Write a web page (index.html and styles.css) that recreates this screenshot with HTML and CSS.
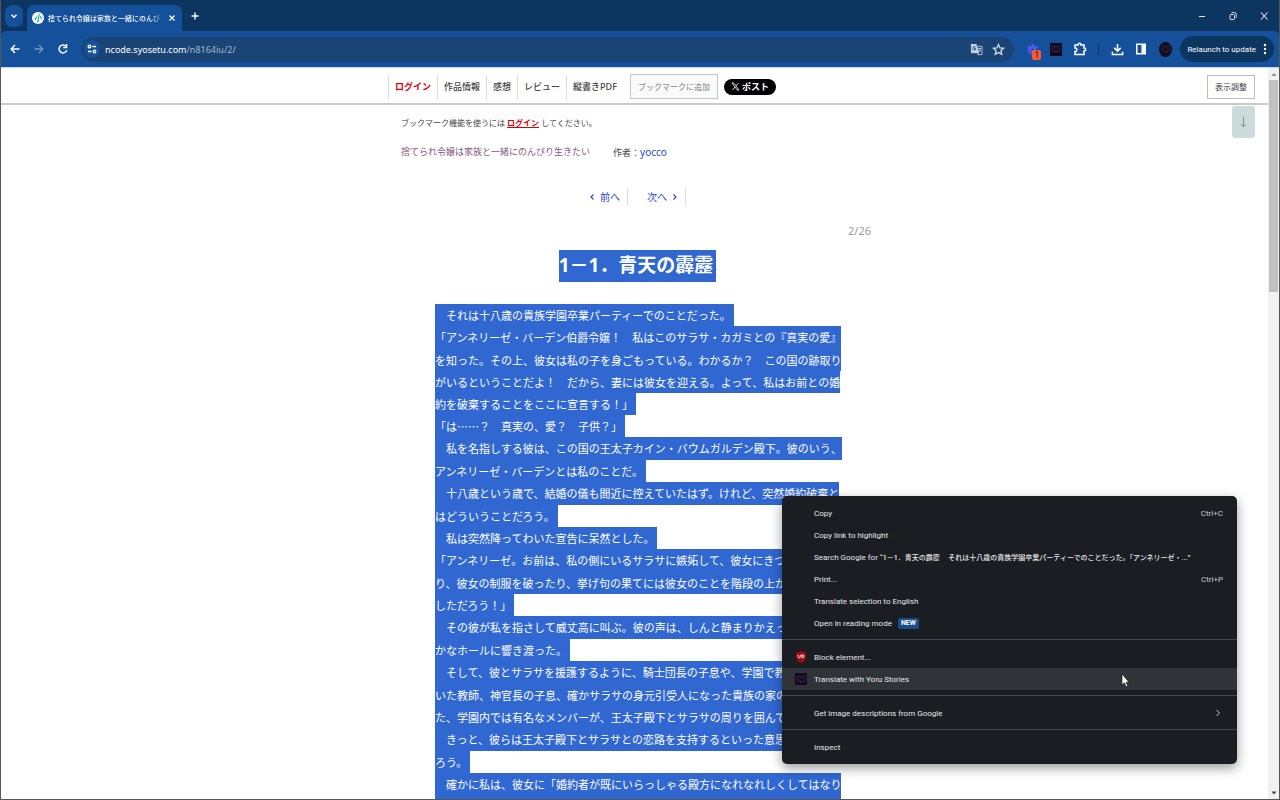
FILE: index.html
```html
<!DOCTYPE html>
<html lang="ja">
<head>
<meta charset="utf-8">
<title>捨てられ令嬢は家族と一緒にのんびり生きたい</title>
<link rel="stylesheet" href="styles.css">
</head>
<body>
<svg class="defs" aria-hidden="true">
  <symbol id="book" viewBox="0 0 16 16"><path d="M8 5.500C7 4 5 3.500 3.500 4.500 2 6 2 9.500 3.500 11c1.500 0 3.500.3 4.500 1.500 1-1.200 3-1.500 4.500-1.500C14 9.500 14 6 12.500 4.500 11 3.500 9 4 8 5.500zM8 5.500v1.500M8 10v2.500M5.500 7v1.500M10.500 7v1.500" fill="none" stroke="#463a5c" stroke-width=".9"/></symbol>
</svg>
<div class="window">
  <div class="tabs">
    <button class="tab-search" aria-label="Search tabs"><svg viewBox="0 0 12 12" width="10" height="10"><path d="M3 4.500 6 7.500l3-3" fill="none" stroke="#fff" stroke-width="1.800"/></svg></button>
    <div class="tab">
      <svg viewBox="0 0 12 12" width="12" height="12"><circle cx="6" cy="6" r="6" fill="#fff"/><path d="M7.200 2 6 9.500l-1-.6M4.800 4.500 3 8M8.500 4l1 3.300" fill="none" stroke="#18a7c9" stroke-width="1.200"/></svg>
      <span class="tab-title">捨てられ令嬢は家族と一緒にのんび</span>
      <button aria-label="Close tab"><svg viewBox="0 0 8 8" width="8" height="8"><path d="m1.500 1.500 5 5m0-5-5 5" stroke="#fff" stroke-width="1.200"/></svg></button>
    </div>
    <button class="new-tab" aria-label="New tab"><svg viewBox="0 0 10 10" width="10" height="10"><path d="M5 1.500v7M1.500 5h7" stroke="#fff" stroke-width="1.400"/></svg></button>
    <div class="window-buttons">
      <button aria-label="Minimize"><svg viewBox="0 0 10 10" width="10" height="10"><path d="M2 5.500h6" stroke="#dfe7f0"/></svg></button>
      <button aria-label="Restore"><svg viewBox="0 0 10 10" width="10" height="10"><rect x="2" y="3.500" width="4.500" height="5" rx="1" fill="none" stroke="#dfe7f0"/><path d="M3.500 2Q4 1.500 5 1.500h1.500Q8.300 1.500 8.300 3.500V5.500q0 1-.8 1.500" fill="none" stroke="#dfe7f0"/></svg></button>
      <button aria-label="Close"><svg viewBox="0 0 10 10" width="10" height="10"><path d="m2 1.500 6.500 7m0-7L2 8.500" stroke="#dfe7f0" stroke-width="1.100"/></svg></button>
    </div>
  </div>
  <div class="toolbar">
    <div class="nav-buttons">
      <button aria-label="Back"><svg viewBox="0 0 12 12" width="12" height="12"><path d="M10.500 6H2.500M6 2 2.200 6 6 10" fill="none" stroke="#fff" stroke-width="1.500"/></svg></button>
      <button aria-label="Forward"><svg viewBox="0 0 12 12" width="12" height="12"><path d="M1.500 6h8M6 2l3.800 4L6 10" fill="none" stroke="#7497c4" stroke-width="1.300"/></svg></button>
      <button aria-label="Reload"><svg viewBox="0 0 12 12" width="12" height="12"><path d="M9.800 7.300A4 4 0 1 1 9 3.200" fill="none" stroke="#fff" stroke-width="1.500"/><path d="M10.300 1v4.200H6.200V3.800h2.700V1z" fill="#fff"/></svg></button>
    </div>
    <div class="omnibox">
      <button class="site-info" aria-label="Site information"><svg viewBox="0 0 12 12" width="12" height="12" fill="none" stroke="#fff" stroke-width="1.300"><circle cx="3.500" cy="3.500" r="1.300"/><path d="M6.500 3.500H10M2 8.500h3.500"/><circle cx="8.500" cy="8.500" r="1.300"/></svg></button>
      <div class="url" role="textbox" aria-label="Address">ncode.syosetu.com<span>/n8164iu/2/</span></div>
      <button aria-label="Translate this page"><svg viewBox="0 0 14 14" width="13" height="13"><path d="M1 1h6l3 10H2q-1 0-1-1z" fill="#c3cede"/><path d="M6 4.500A1.800 1.800 0 1 0 6 7V6H4.500" fill="none" stroke="#1a4476"/><path d="M8 3.500h5v9H8l1.500-1.500M8.500 6H12M10.300 5v1M11.500 6q-.5 2.500-3 3.500M9.500 7.500l2.500 2" fill="none" stroke="#c3cede" stroke-width=".9"/></svg></button>
      <button aria-label="Bookmark this tab"><svg viewBox="0 0 12 12" width="13" height="13"><path d="m6 1.300 1.400 3.200 3.400.3-2.600 2.300.8 3.400L6 8.700l-3 1.800.8-3.400L1.200 4.800l3.400-.3z" fill="none" stroke="#dbe4f0" stroke-width="1.100"/></svg></button>
    </div>
    <div class="extensions">
      <button class="ext" aria-label="Extension"><svg viewBox="0 0 14 14" width="13" height="13"><path d="M7 1v4M4 2l1.500 3.500M1.500 4.500 5 6M1 7.500h4M2 11l3-2.500M10 2 8.500 5M12.500 4.500 9 6M5 13l1-3.500" stroke="#5d5cff" stroke-width="1.300"/><circle cx="7" cy="7" r="2.300" fill="none" stroke="#5d5cff" stroke-width="1.300"/></svg><span class="badge">1</span></button>
      <button class="ext dark" aria-label="Yoru Stories"><svg width="12" height="12"><use href="#book"/></svg></button>
      <button class="ext" aria-label="Extensions"><svg viewBox="0 0 14 14" width="14" height="14"><path d="M2 3h3q0-1.700 1.500-1.700T8 3h3v3q1.700 0 1.700 1.500T11 9v3.500H2V9.500q1.800 0 1.800-1.800T2 6z" fill="none" stroke="#fff" stroke-width="1.500"/></svg></button>
      <span class="divider"></span>
      <button class="ext" aria-label="Downloads"><svg viewBox="0 0 12 12" width="13" height="13"><path d="M6 1v6M3 4.500l3 3 3-3M1.300 8v2.700h9.400V8" fill="none" stroke="#fff" stroke-width="1.400"/></svg></button>
      <button class="ext" aria-label="Side panel"><svg viewBox="0 0 12 12" width="12" height="12"><path d="M1 .5h10v11H1zM2.500 2v8H6.500V2z" fill="#fff" fill-rule="evenodd"/></svg></button>
      <button class="ext dark round" aria-label="Profile"><svg width="12" height="12"><use href="#book"/></svg></button>
    </div>
    <button class="relaunch">Relaunch to update<svg viewBox="0 0 4 12" width="4" height="12" fill="#fff"><circle cx="2" cy="2" r="1.200"/><circle cx="2" cy="6" r="1.200"/><circle cx="2" cy="10" r="1.200"/></svg></button>
  </div>

  <div class="viewport">
    <div class="page">
      <header class="site-header">
        <nav>
          <a class="login" href="#">ログイン</a><a href="#">作品情報</a><a href="#">感想</a><a href="#">レビュー</a><a href="#">縦書きPDF</a>
          <button class="bookmark">ブックマークに追加</button>
          <button class="post"><svg viewBox="0 0 10 10" width="9" height="9"><path d="M1 1h2l6 8H7zM8.500 1 5.500 4.400M4.500 5.600 1.500 9" fill="none" stroke="#fff" stroke-width=".9"/></svg>ポスト</button>
        </nav>
        <button class="display">表示調整</button>
      </header>
      <button class="scroll-down" aria-label="ページ下部へ"><svg viewBox="0 0 10 14" width="9" height="12"><path d="M5 1v11.500M2 9.500l3 3 3-3" fill="none" stroke="#768281"/></svg></button>
      <main>
        <p class="notice">ブックマーク機能を使うには <a href="#">ログイン</a> してください。</p>
        <p class="work"><a href="#">捨てられ令嬢は家族と一緒にのんびり生きたい</a><span>作者：<a class="author" href="#">yocco</a></span></p>
        <div class="pager">
          <a href="#"><svg viewBox="0 0 6 8" width="6" height="8"><path d="M4.500 1.500 2 4l2.500 2.500" fill="none" stroke="#2847c8" stroke-width="1.200"/></svg>前へ</a>
          <a href="#">次へ<svg viewBox="0 0 6 8" width="6" height="8"><path d="M1.500 1.500 4 4 1.500 6.500" fill="none" stroke="#2847c8" stroke-width="1.200"/></svg></a>
        </div>
        <p class="count">2/26</p>
        <h1><span>1－1．青天の霹靂</span></h1>
        <article>
          <p><span>　それは十八歳の貴族学園卒業パーティーでのことだった。</span></p>
          <p><span>「アンネリーゼ・バーデン伯爵令嬢！　私はこのサラサ・カガミとの『真実の愛』</span><span>を知った。その上、彼女は私の子を身ごもっている。わかるか？　この国の跡取り</span><span>がいるということだよ！　だから、妻には彼女を迎える。よって、私はお前との婚</span><span>約を破棄することをここに宣言する！」</span></p>
          <p><span>「は……？　真実の、愛？　子供？」</span></p>
          <p><span>　私を名指しする彼は、この国の王太子カイン・バウムガルデン殿下。彼のいう、</span><span>アンネリーゼ・バーデンとは私のことだ。</span></p>
          <p><span>　十八歳という歳で、結婚の儀も間近に控えていたはず。けれど、突然婚約破棄と</span><span>はどういうことだろう。</span></p>
          <p><span>　私は突然降ってわいた宣告に呆然とした。</span></p>
          <p><span>「アンネリーゼ。お前は、私の側にいるサラサに嫉妬して、彼女にきつく</span><span>り、彼女の制服を破ったり、挙げ句の果てには彼女のことを階段の上から</span><span>しただろう！」</span></p>
          <p><span>　その彼が私を指さして威丈高に叫ぶ。彼の声は、しんと静まりかえった</span><span>かなホールに響き渡った。</span></p>
          <p><span>　そして、彼とサラサを援護するように、騎士団長の子息や、学園で教鞭</span><span>いた教師、神官長の子息、確かサラサの身元引受人になった貴族の家の子</span><span>た、学園内では有名なメンバーが、王太子殿下とサラサの周りを囲んでい</span></p>
          <p><span>　きっと、彼らは王太子殿下とサラサとの恋路を支持するといった意思表</span><span>ろう。</span></p>
          <p class="more"><span>　確かに私は、彼女に「婚約者が既にいらっしゃる殿方になれなれしくしてはなり</span></p>
        </article>
      </main>
    </div>
    <div class="scrollbar" aria-hidden="true">
      <svg viewBox="0 0 10 12" width="10" height="12"><path d="m2.500 8 2.500-3 2.500 3z" fill="#8b8b8b"/></svg>
      <div class="thumb"></div>
      <svg viewBox="0 0 10 12" width="10" height="12"><path d="m2.500 4.500 2.500 3 2.500-3z" fill="#404040"/></svg>
    </div>
  </div>
</div>

<div class="menu" role="menu">
  <div class="group">
    <button role="menuitem">Copy<kbd>Ctrl+C</kbd></button>
    <button role="menuitem">Copy link to highlight</button>
    <button role="menuitem"><span>Search Google for “<span class="query">1－1．青天の霹靂　 それは十八歳の貴族学園卒業パーティーでのことだった。「アンネリーゼ・...</span>”</span></button>
    <button role="menuitem">Print...<kbd>Ctrl+P</kbd></button>
    <button role="menuitem">Translate selection to English</button>
    <button role="menuitem">Open in reading mode<span class="new">NEW</span></button>
  </div>
  <div class="group">
    <button role="menuitem" class="with-icon"><svg viewBox="0 0 12 12" width="12" height="12"><path d="M6 0q2 1.200 5 1.200v5Q11 10 6 12 1 10 1 6.200v-5Q4 1.200 6 0z" fill="#9b0a12"/><path d="M3.200 3.800v1.800q0 1.200 1.100 1.200t1.100-1.200V3.800M7 3.800v3q2 .2 2-1.500T7 3.800z" fill="none" stroke="#fff" stroke-width=".9"/></svg>Block element...</button>
    <button role="menuitem" class="with-icon hover"><svg class="dark" width="12" height="12"><use href="#book"/></svg>Translate with Yoru Stories</button>
  </div>
  <div class="group">
    <button role="menuitem">Get image descriptions from Google<svg class="arrow" viewBox="0 0 6 8" width="6" height="8"><path d="M1.500 1 4.500 4l-3 3" fill="none" stroke="#c7c9cc"/></svg></button>
  </div>
  <div class="group">
    <button role="menuitem">Inspect</button>
  </div>
</div>
<svg class="cursor" viewBox="0 0 9 15" width="9" height="15" aria-hidden="true"><path d="M1 1v11l2.400-2.200L5 13.700l1.700-.8-1.600-3.600H8z" fill="#fff" stroke="#111" stroke-width=".6"/></svg>
</body>
</html>
```
FILE: styles.css
```css
* { box-sizing: border-box; }
body {
  margin: 0;
  font-family: "Noto Sans", "Noto Sans CJK JP", sans-serif;
  color: #444;
  background: #fff;
}
p, h1 { margin: 0; }
a { color: inherit; text-decoration: none; }
svg { display: block; flex: none; }
button {
  display: flex;
  align-items: center;
  justify-content: center;
  padding: 0;
  border: 0;
  background: none;
  color: inherit;
  font: inherit;
  white-space: nowrap;
}
.defs { position: absolute; width: 0; height: 0; }
.window {
  display: flex;
  flex-direction: column;
  height: 100vh;
  overflow: hidden;
  border: 1px solid #555;
  border-top: 0;
  background: #0c3560;
}

/* Tab strip */
.tabs {
  display: flex;
  align-items: center;
  height: 31px;
  flex: none;
  padding-left: 4px;
}
.tab-search { width: 18px; height: 22px; border-radius: 7px; background: #14519a; }
.tab {
  display: flex;
  align-items: center;
  align-self: flex-end;
  gap: 4px;
  width: 155px;
  height: 26px;
  margin-left: 4px;
  padding: 0 6px 0 5px;
  border-radius: 7px 7px 0 0;
  background: #14519a;
}
.tab-title {
  flex: 1;
  overflow: hidden;
  white-space: nowrap;
  font-size: 7px;
  font-weight: 500;
  color: #fff;
  mask-image: linear-gradient(to right, #000 88%, transparent);
}
.new-tab { margin-left: 8px; }
.window-buttons { display: flex; gap: 21px; margin-left: auto; padding-right: 10px; }

/* Toolbar */
.toolbar {
  display: flex;
  align-items: center;
  height: 37px;
  flex: none;
  padding: 0 5px 0 8px;
  border-bottom: 1px solid #c5d6ea;
  border-radius: 5px 5px 0 0;
  background: #14519a;
}
.nav-buttons { display: flex; gap: 12px; }
.omnibox {
  display: flex;
  align-items: center;
  flex: 1;
  gap: 9px;
  height: 25px;
  margin-left: 12px;
  padding: 0 9px 0 3px;
  border-radius: 13px;
  background: #1a4476;
}
.site-info { width: 16px; height: 18px; border-radius: 9px; background: #14519a; }
.url { flex: 1; margin-left: -4px; font-size: 9px; color: #fff; }
.url span { color: #a5b7ce; }
.extensions { display: flex; align-items: center; gap: 12px; margin: 0 8px 0 12px; }
.ext { position: relative; width: 12px; height: 13px; }
.dark { background: #120a1e; }
.round { border-radius: 50%; width: 13px; height: 15px; }
.badge {
  position: absolute;
  left: 6px;
  top: 7px;
  width: 9px;
  height: 10px;
  border-radius: 2px;
  background: #fa5a35;
  color: #201010;
  font-size: 8px;
  line-height: 10px;
}
.divider { width: 1px; height: 12px; background: #0c3560; }
.relaunch {
  gap: 7px;
  height: 26px;
  padding: 0 7px;
  border-radius: 13px;
  background: #0c3560;
  color: #fff;
  font-family: Roboto, sans-serif;
  font-size: 8px;
}

/* Page */
.viewport { display: flex; flex: 1; min-height: 0; background: #fff; }
.page { position: relative; flex: 1; overflow: hidden; }
.site-header {
  display: grid;
  grid-template-columns: 1fr 493px 1fr;
  align-items: center;
  height: 37px;
  padding-top: 2px;
  border-bottom: 2px solid #c9c9c9;
}
nav {
  display: flex;
  grid-column: 2;
  align-items: center;
  font-size: 9px;
  font-weight: 500;
  white-space: nowrap;
}
nav a {
  padding: 0 6px;
  border-left: 1px solid #ddd;
  line-height: 24px;
}
nav .login { color: #d8000f; font-weight: 700; }
.bookmark {
  height: 25px;
  margin: 0 6px 0 7px;
  padding: 0 7px;
  border: 1px solid #c4c4c4;
  background: #fafafa;
  color: #999;
  font-size: 8px;
}
.post {
  gap: 2px;
  height: 16px;
  padding: 0 7px;
  border-radius: 8px;
  background: #000;
  color: #fff;
  font-weight: 700;
}
.display {
  justify-self: end;
  height: 24px;
  margin-right: 13px;
  padding: 0 7px;
  border: 1px solid #bbb;
  font-size: 8px;
}
.scroll-down {
  position: absolute;
  top: 38px;
  right: 13px;
  width: 23px;
  height: 32px;
  border-radius: 3px;
  background: #cbdcdb;
}
main { width: 493px; margin: 0 auto; }
.notice { padding: 11px 13px 0; font-size: 8px; line-height: 14px; }
.notice a { color: #d8000f; font-weight: 700; text-decoration: underline; }
.work {
  display: flex;
  gap: 23px;
  padding: 14px 13px 0;
  font-size: 9px;
  line-height: 16px;
}
.work > a { color: #85597c; }
.work .author { color: #2847c8; font-size: 10px; }
.pager {
  display: flex;
  gap: 19px;
  justify-content: center;
  margin-top: 27px;
  padding-left: 6px;
  font-size: 10px;
  line-height: 18px;
  color: #2847c8;
}
.pager a {
  display: flex;
  align-items: center;
  gap: 5px;
  padding-right: 7px;
  border-right: 1px solid #ddd;
}
.count {
  margin-top: 16px;
  padding-right: 10px;
  text-align: right;
  font-size: 11px;
  line-height: 18px;
  color: #999;
}
h1 {
  display: flex;
  justify-content: center;
  margin-top: 10px;
  padding-left: 6px;
  font-size: 19px;
  line-height: 30px;
  color: #fff;
}
h1 span { padding: 0 3px 2px 0; background: #3067d1; }
article {
  margin: 22px 0 0 47px;
  font-family: "Noto Sans CJK JP", sans-serif;
  font-size: 11px;
  line-height: 22px;
  color: #fff;
}
article span {
  display: block;
  width: fit-content;
  white-space: nowrap;
  background: #3067d1;
}
article span:last-child { padding-right: 3px; }
article span:first-child:not(:last-child) { padding-bottom: 1px; }
article .more span { padding: 0 0 8px; }

.scrollbar {
  display: flex;
  flex-direction: column;
  align-items: center;
  width: 11px;
  background: #f1f1f1;
}
.thumb { width: 9px; height: 29%; margin-bottom: auto; background: #c1c1c1; }

/* Context menu */
.menu {
  position: absolute;
  top: 496px;
  right: 43px;
  width: 455px;
  border-radius: 5px;
  background: #1a1d21;
  box-shadow: 0 4px 12px rgba(0, 0, 0, .4);
  color: #e6e7e9;
  font-family: Roboto, "Noto Sans CJK JP", sans-serif;
  font-size: 8px;
}
.group { padding: 6px 0 5px; }
.group:last-child { padding-bottom: 6px; }
.group + .group { border-top: 1px solid #44474f; }
.menu button {
  justify-content: flex-start;
  width: 100%;
  height: 22px;
  padding: 0 14px 0 32px;
}
.menu .with-icon { gap: 7px; padding-left: 13px; }
.menu .hover { background: #303338; }
.menu kbd { margin-left: auto; font: inherit; color: #c7c9cc; }
.query { font-size: 7px; font-weight: 500; }
.arrow { margin: 0 2px 0 auto; }
.new {
  margin-left: 6px;
  padding: 0 3px;
  border-radius: 2px;
  background: #1a4b8c;
  color: #fff;
  font-size: 7px;
  font-weight: 700;
  line-height: 11px;
}
.cursor { position: absolute; left: 1121px; top: 673px; }
```
